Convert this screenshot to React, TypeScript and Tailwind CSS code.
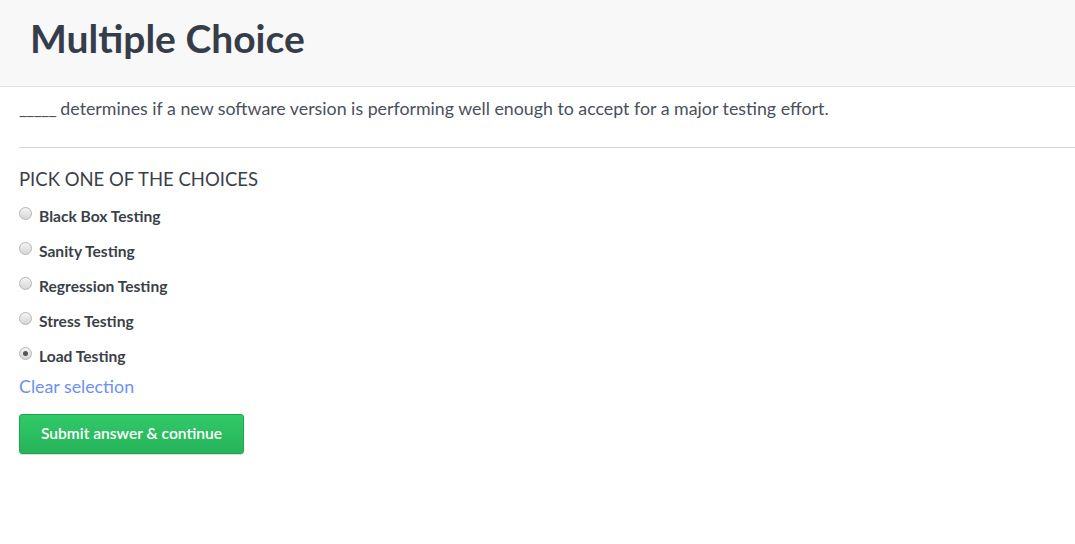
import { useState } from 'react';

const choices = [
  'Black Box Testing',
  'Sanity Testing',
  'Regression Testing',
  'Stress Testing',
  'Load Testing',
];

function Radio({ checked }: { checked: boolean }) {
  return (
    <span className="relative mt-[1px] inline-block h-[13px] w-[13px] shrink-0 rounded-full border border-[#b5b5b5] bg-gradient-to-b from-[#f4f4f4] to-[#d6d6d6]">
      {checked && (
        <span className="absolute left-[3px] top-[3px] h-[5px] w-[5px] rounded-full bg-[#555]" />
      )}
    </span>
  );
}

export default function App() {
  const [selected, setSelected] = useState<number | null>(4);

  return (
    <div className="min-h-[544px] bg-white font-['Lato','Open_Sans',sans-serif] text-[#333]">
      {/* Header */}
      <div className="h-[87px] border-b border-[#e0e0e0] bg-[#f8f8f8] pl-[30px] pt-[14px]">
        <h1 className="text-[39px] font-bold leading-[48px] text-[#363d4a]">Multiple Choice</h1>
      </div>

      <div className="pl-[19px]">
        <p className="pt-[8px] text-[17.8px] leading-[26px] text-[#4a4f5c]">
          <span className="tracking-[-0.8px]">_____</span> determines if a new software version is
          performing well enough to accept for a major testing effort.
        </p>

        <div className="mt-[26px] border-t border-[#d6d6d6]" />

        <h2 className="mt-[19px] text-[18.5px] uppercase leading-[24px] text-[#3a3f4a]">
          Pick one of the choices
        </h2>

        <div className="mt-[7px] flex flex-col">
          {choices.map((c, i) => (
            <label
              key={c}
              className="flex h-[35px] cursor-pointer items-center gap-[7px]"
              onClick={() => setSelected(i)}
            >
              <span className="-mt-[6px] flex">
                <Radio checked={selected === i} />
              </span>
              <span className="text-[15.6px] font-bold leading-[20px] text-[#3b3f48]">{c}</span>
            </label>
          ))}
        </div>

        <button
          className="mt-[1px] block text-[17.8px] leading-[24px] text-[#6d8ff5]"
          onClick={() => setSelected(null)}
        >
          Clear selection
        </button>

        <button className="mt-[16px] h-[40px] w-[225px] rounded-[3px] border border-[#21a352] bg-gradient-to-b from-[#30c968] to-[#27b45a] text-[15.6px] font-semibold text-white shadow-[0_1px_1px_rgba(0,0,0,0.15)]">
          Submit answer &amp; continue
        </button>
      </div>
    </div>
  );
}
